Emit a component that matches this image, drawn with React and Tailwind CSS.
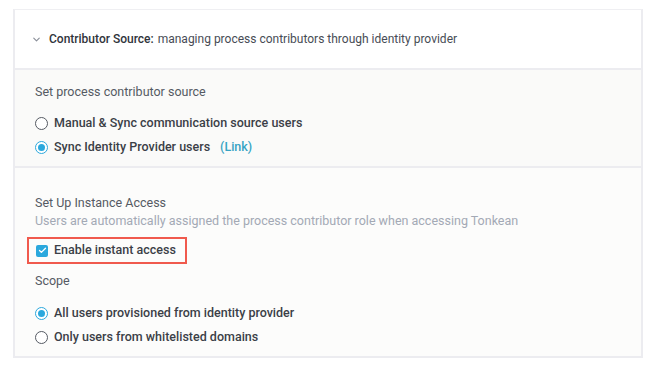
import { ChevronDown, Check } from 'lucide-react';

function Radio({ checked, children }) {
  return (
    <label className="flex items-center gap-[6px] h-[24px] text-[12.5px] font-medium text-[#3b3f47]">
      <span className={`w-[13px] h-[13px] rounded-full border flex items-center justify-center bg-white ${checked ? 'border-[#2ba8dd]' : 'border-[#555a63]'}`}>
        {checked && <span className="w-[7px] h-[7px] rounded-full bg-[#2ba8dd]" />}
      </span>
      {children}
    </label>
  );
}

export default function App() {
  return (
    <div className="w-[654px] h-[368px] bg-white pt-[9px] pl-[13px] font-['Roboto',sans-serif]">
      <div className="w-[630px] border-2 border-[#ececf0] border-t-[1px] border-t-[#efeff2]">
        {/* header */}
        <div className="h-[58px] bg-white flex items-center pl-[16px] text-[12px] text-[#474c55]">
          <ChevronDown size={11} strokeWidth={2.5} className="text-[#8a8f99] mr-[7px]" />
          <span className="font-medium text-[#30343b]">Contributor Source:</span>
          <span className="ml-[4px]">managing process contributors through identity provider</span>
        </div>

        <div className="border-t-2 border-[#ececf0] bg-[#fafaf9] pl-[20px] pt-[13px] pb-[10px] h-[98px]">
          <p className="text-[12.5px] text-[#555a63]">Set process contributor source</p>
          <div className="mt-[10px] flex flex-col">
            <Radio>Manual &amp; Sync communication source users</Radio>
            <Radio checked>
              Sync Identity Provider users
              <span className="ml-[4px] text-[#35a3c4]">(Link)</span>
            </Radio>
          </div>
        </div>

        <div className="border-t-2 border-[#ececf0] bg-[#fcfcfb] pl-[20px] pt-[26px] h-[190px]">
          <p className="text-[12.5px] leading-[18px] text-[#555a63]">Set Up Instance Access</p>
          <p className="text-[12.5px] leading-[18px] text-[#a3a9b5]">Users are automatically assigned the process contributor role when accessing Tonkean</p>
          <div className="mt-[7px] -ml-[8px] w-[160px] h-[27px] border-2 border-[#f05a4d] flex items-center pl-[7px] gap-[6px]">
            <span className="w-[12px] h-[12px] rounded-[2px] bg-[#2ba8dd] flex items-center justify-center">
              <Check size={9} strokeWidth={3.5} className="text-white" />
            </span>
            <span className="text-[12.5px] font-medium text-[#3b3f47]">Enable instant access</span>
          </div>
          <p className="text-[12.5px] text-[#555a63] mt-[8px]">Scope</p>
          <div className="mt-[11px] flex flex-col">
            <Radio checked>All users provisioned from identity provider</Radio>
            <Radio>Only users from whitelisted domains</Radio>
          </div>
        </div>
      </div>
    </div>
  );
}
